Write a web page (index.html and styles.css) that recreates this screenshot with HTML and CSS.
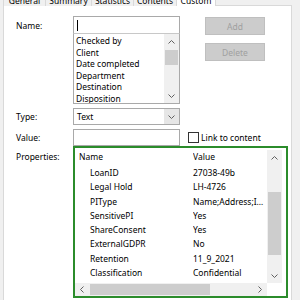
FILE: index.html
```html
<!DOCTYPE html>
<html>
<head>
    <title>Properties - Custom</title>
    <link rel="stylesheet" href="styles.css">
</head>
<body>
    <div class="tabs">
        <div class="tab tab-general">General</div>
        <div class="tab tab-summary">Summary</div>
        <div class="tab tab-statistics">Statistics</div>
        <div class="tab tab-contents">Contents</div>
        <div class="tab tab-custom tab-active">Custom</div>
    </div>

    <div class="panel">
        <div class="row row-name">
            <div class="label">Name:</div>
            <div class="field">
                <div class="input"><span class="caret"></span></div>
                <div class="listbox">
                    <ul class="items">
                        <li>Checked by</li>
                        <li>Client</li>
                        <li>Date completed</li>
                        <li>Department</li>
                        <li>Destination</li>
                        <li>Disposition</li>
                    </ul>
                    <div class="vscroll">
                        <div class="arrow">
                            <svg width="7" height="4" viewBox="0 0 7 4"><polyline points="0.5,3.5 3.5,0.5 6.5,3.5" fill="none" stroke="#606060"/></svg>
                        </div>
                        <div class="track track-small"><div class="thumb thumb-small"></div></div>
                        <div class="arrow">
                            <svg width="7" height="4" viewBox="0 0 7 4"><polyline points="0.5,0.5 3.5,3.5 6.5,0.5" fill="none" stroke="#606060"/></svg>
                        </div>
                    </div>
                </div>
            </div>
            <div class="buttons">
                <button class="button" disabled>Add</button>
                <button class="button" disabled>Delete</button>
            </div>
        </div>

        <div class="row row-type">
            <div class="label">Type:</div>
            <div class="combo">
                <span class="combo-text">Text</span>
                <span class="combo-button">
                    <svg width="7" height="4" viewBox="0 0 7 4"><polyline points="0.5,0.5 3.5,3.5 6.5,0.5" fill="none" stroke="#606060"/></svg>
                </span>
            </div>
        </div>

        <div class="row row-value">
            <div class="label">Value:</div>
            <div class="input input-value"></div>
            <span class="checkbox"></span>
            <span class="check-label">Link to content</span>
        </div>

        <div class="row row-props">
            <div class="label label-props">Properties:</div>
            <div class="props">
                <div class="listview">
                    <div class="lv-head">
                        <span class="col-name">Name</span>
                        <span class="col-value">Value</span>
                    </div>
                    <div class="lv-row"><span class="col-name">LoanID</span><span class="col-value">27038-49b</span></div>
                    <div class="lv-row"><span class="col-name">Legal Hold</span><span class="col-value">LH-4726</span></div>
                    <div class="lv-row"><span class="col-name">PIType</span><span class="col-value">Name;Address;Income</span></div>
                    <div class="lv-row"><span class="col-name">SensitivePI</span><span class="col-value">Yes</span></div>
                    <div class="lv-row"><span class="col-name">ShareConsent</span><span class="col-value">Yes</span></div>
                    <div class="lv-row"><span class="col-name">ExternalGDPR</span><span class="col-value">No</span></div>
                    <div class="lv-row"><span class="col-name">Retention</span><span class="col-value">11_9_2021</span></div>
                    <div class="lv-row"><span class="col-name">Classification</span><span class="col-value">Confidential</span></div>
                </div>
                <div class="vscroll vscroll-props">
                    <div class="arrow">
                        <svg width="7" height="4" viewBox="0 0 7 4"><polyline points="0.5,3.5 3.5,0.5 6.5,3.5" fill="none" stroke="#606060"/></svg>
                    </div>
                    <div class="track track-props"><div class="thumb thumb-props"></div></div>
                    <div class="arrow">
                        <svg width="7" height="4" viewBox="0 0 7 4"><polyline points="0.5,0.5 3.5,3.5 6.5,0.5" fill="none" stroke="#606060"/></svg>
                    </div>
                </div>
                <div class="hscroll">
                    <div class="harrow">
                        <svg width="4" height="7" viewBox="0 0 4 7"><polyline points="3.5,0.5 0.5,3.5 3.5,6.5" fill="none" stroke="#606060"/></svg>
                    </div>
                    <div class="htrack"><div class="hthumb"></div></div>
                    <div class="harrow">
                        <svg width="4" height="7" viewBox="0 0 4 7"><polyline points="0.5,0.5 3.5,3.5 0.5,6.5" fill="none" stroke="#606060"/></svg>
                    </div>
                </div>
                <div class="corner"></div>
            </div>
        </div>
    </div>
</body>
</html>
```

FILE: styles.css
```css
body {
    margin: 0;
    background-color: #f0f0f0;
    font-family: 'Noto Sans', sans-serif;
    font-size: 8.5px;
    color: #000;
    overflow: hidden;
}
.tabs {
    display: flex;
    height: 6px;
    margin-left: 3px;
}
.tab {
    position: relative;
    height: 6px;
    border: 1px solid #d9d9d9;
    border-top: none;
    border-bottom: none;
    margin-left: -1px;
    box-sizing: border-box;
    text-align: center;
    line-height: 1px;
    overflow: hidden;
    background-color: #f0f0f0;
}
.tab:first-child {
    margin-left: 0;
}
.tab-general { width: 43px; }
.tab-summary { width: 47px; }
.tab-statistics { width: 43px; }
.tab-contents { width: 44px; }
.tab-custom { width: 40px; }
.tab-active {
    background-color: #fff;
    z-index: 1;
}
.panel {
    margin: -1px 0 0 3px;
    width: 289px;
    height: 300px;
    box-sizing: border-box;
    background-color: #fff;
    border: 1px solid #d9d9d9;
    padding: 10px 0 0 12px;
}
.row {
    display: flex;
    align-items: flex-start;
}
.label {
    width: 57px;
    flex: none;
}
.row-name .label {
    line-height: 18px;
    padding-top: 1px;
}
.field {
    width: 107px;
    flex: none;
}
.input {
    width: 107px;
    height: 18px;
    border: 1px solid #a9a9a9;
    box-sizing: border-box;
    background-color: #fff;
}
.caret {
    display: block;
    width: 1px;
    height: 11px;
    background-color: #000;
    margin: 3px 0 0 3px;
}
.listbox {
    display: flex;
    height: 71px;
    margin-top: -1px;
    border: 1px solid #a9a9a9;
    border-top-color: #c8c8c8;
    box-sizing: border-box;
}
.items {
    list-style: none;
    margin: 0;
    padding: 1px 0 0 2px;
    flex: 1;
    line-height: 11.5px;
    overflow: hidden;
    white-space: nowrap;
}
.vscroll {
    width: 15px;
    flex: none;
    background-color: #f0f0f0;
    display: flex;
    flex-direction: column;
}
.arrow {
    height: 15px;
    flex: none;
    display: flex;
    align-items: center;
    justify-content: center;
}
.track {
    flex: 1;
    display: flex;
    flex-direction: column;
    align-items: center;
}
.thumb {
    width: 13px;
    background-color: #cdcdcd;
}
.thumb-small {
    height: 15px;
    margin-top: 1px;
}
.buttons {
    margin-left: 25px;
    padding-top: 1px;
}
.button {
    display: block;
    width: 60px;
    height: 18px;
    padding: 0;
    background-color: #cccccc;
    border: 1px solid #bfbfbf;
    color: #a0a0a0;
    font: inherit;
}
.button + .button {
    margin-top: 8px;
}
.row-type {
    margin-top: 4px;
}
.row-type .label,
.row-value .label {
    line-height: 17px;
}
.combo {
    display: flex;
    width: 107px;
    height: 17px;
    border: 1px solid #a9a9a9;
    box-sizing: border-box;
}
.combo-text {
    flex: 1;
    padding-left: 3px;
    line-height: 15px;
}
.combo-button {
    width: 15px;
    background-color: #e6e6e6;
    display: flex;
    align-items: center;
    justify-content: center;
}
.row-value {
    margin-top: 4px;
}
.input-value {
    height: 17px;
}
.checkbox {
    width: 11px;
    height: 11px;
    margin: 3px 0 0 8px;
    border: 1px solid #333;
    box-sizing: border-box;
    flex: none;
}
.check-label {
    margin-left: 2px;
    line-height: 17px;
}
.label-props {
    padding-top: 5px;
    line-height: 12px;
}
.props {
    width: 215px;
    height: 152px;
    border: 2px solid #2b8c2b;
    box-sizing: border-box;
    padding-right: 4px;
    display: grid;
    grid-template-columns: 1fr 15px;
    grid-template-rows: 1fr 13px;
}
.listview {
    overflow: hidden;
    white-space: nowrap;
}
.lv-head {
    display: flex;
    height: 18px;
    line-height: 18px;
}
.lv-row {
    display: flex;
    height: 14.3px;
    line-height: 14.3px;
}
.col-name {
    width: 118px;
    flex: none;
    padding-left: 4px;
    box-sizing: border-box;
}
.lv-row .col-name {
    padding-left: 15px;
}
.col-value {
    flex: 1;
    min-width: 0;
    overflow: hidden;
    text-overflow: ellipsis;
}
.vscroll-props {
    margin-top: 2px;
}
.track-props {
    padding-top: 27px;
}
.thumb-props {
    height: 63px;
}
.hscroll {
    display: flex;
    background-color: #f0f0f0;
}
.harrow {
    width: 14px;
    flex: none;
    display: flex;
    align-items: center;
    justify-content: center;
}
.htrack {
    flex: 1;
    display: flex;
    align-items: center;
}
.hthumb {
    width: 120px;
    height: 11px;
    margin-left: 1px;
    background-color: #cdcdcd;
}
.corner {
    background-color: #fff;
}
```
